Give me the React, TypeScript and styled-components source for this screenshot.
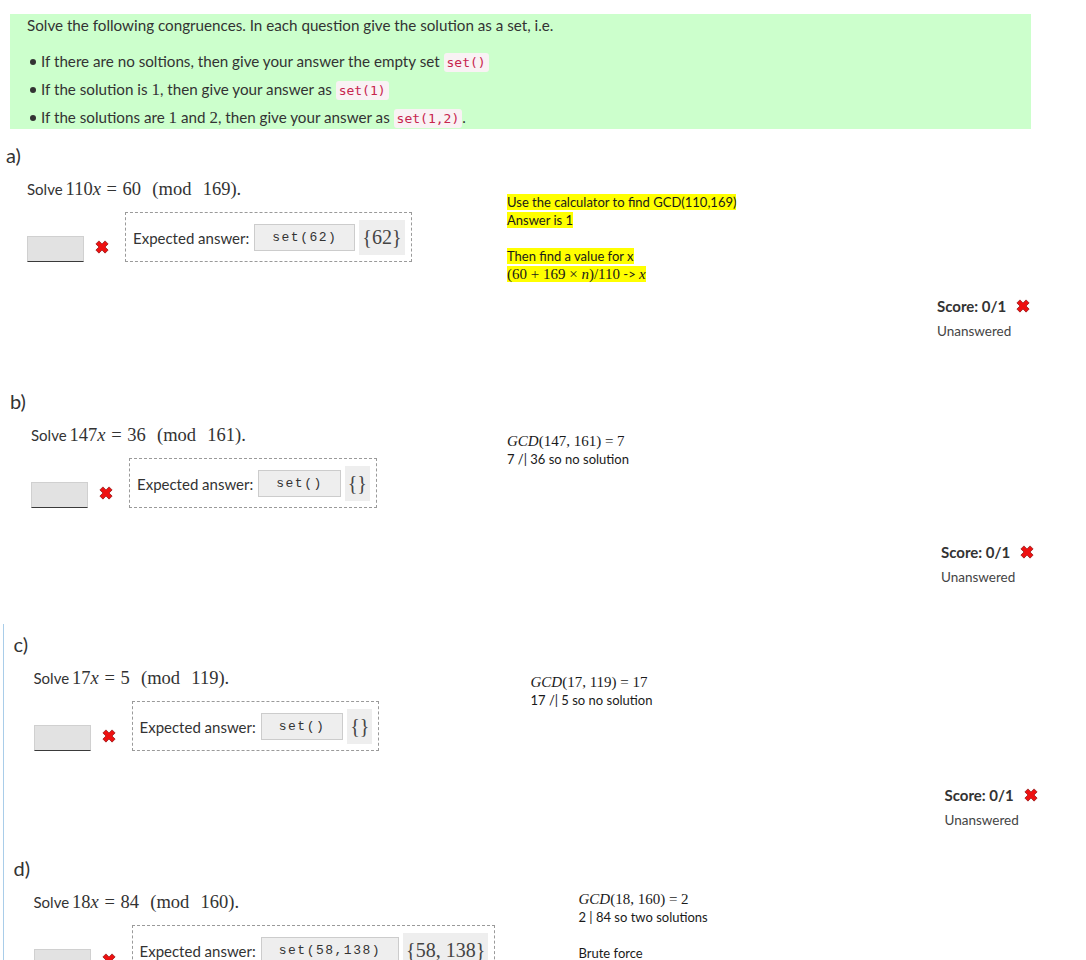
import styled, { createGlobalStyle } from "styled-components";

const GlobalStyle = createGlobalStyle`
    body {
        margin: 0;
        background: #fff;
        color: #333;
        font-family: Lato, "Open Sans", sans-serif;
    }
`;

const Page = styled.div`
    width: 1086px;
    padding-top: 14px;
`;

const Intro = styled.div`
    margin-left: 10px;
    width: 1021px;
    background: #ccffcc;
    padding: 0 17px 0 17px;
    box-sizing: border-box;
    font-size: 15.2px;
    height: 115px;
`;

const IntroText = styled.p`
    margin: 0;
    line-height: 22px;
`;

const BulletList = styled.ul`
    list-style: none;
    margin: 13px 0 0 0;
    padding: 0;
`;

const Bullet = styled.li`
    height: 24px;
    line-height: 24px;
    margin-bottom: 4px;
    &::before {
        content: "";
        display: inline-block;
        width: 6px;
        height: 6px;
        border-radius: 50%;
        background: #333;
        margin: 0 5px 2px 3px;
        vertical-align: middle;
    }
`;

const Code = styled.code`
    font-family: "DejaVu Sans Mono", monospace;
    font-size: 13px;
    line-height: 1;
    color: #c7254e;
    background: #f9f2f4;
    padding: 2px 3px;
    border-radius: 3px;
`;

const MathNum = styled.span`
    font-family: "Liberation Serif", serif;
    font-size: 17px;
    line-height: 1;
`;

// c) and d) share the blue bar on the left
const PartGroup = styled.div`
    margin-top: 37px;
    margin-left: 3px;
    border-left: 1.5px solid #a9cde9;
    padding: 8px 0 0 9.5px;
`;

const Part = styled.section<{ $shift: number; $top: number }>`
    margin-left: ${(p) => p.$shift}px;
    margin-top: ${(p) => p.$top}px;
    width: 1025px;
`;

const PartLabel = styled.h4`
    margin: 0 0 10px 0;
    font-weight: normal;
    font-size: 20px;
    line-height: 24px;
`;

// question | notes | score, the notes may run down past the answer row
const PartBody = styled.div<{ $indent: number; $col: number }>`
    padding-left: ${(p) => p.$indent}px;
    display: grid;
    grid-template-columns: ${(p) => p.$col}px 1fr auto;
    grid-template-rows: auto auto;
    align-items: start;
`;

const QuestionCol = styled.div`
    grid-column: 1;
    grid-row: 1;
`;

const Prompt = styled.p`
    margin: 0;
    font-size: 15px;
    line-height: 24px;
`;

const Math = styled.span`
    font-family: "Liberation Serif", "DejaVu Serif", serif;
    font-size: 18.5px;
    line-height: 1;
    margin-left: 3px;
    word-spacing: 1px;
`;

const MathVar = styled.i`
    font-family: "Liberation Serif", serif;
`;

const AnswerRow = styled.div`
    display: flex;
    align-items: flex-end;
    margin-top: 11px;
`;

const AnswerInput = styled.div`
    width: 57px;
    height: 26px;
    box-sizing: border-box;
    background: #e2e2e2;
    border: 1px solid #d0d0d0;
    border-bottom: 1.5px solid #3a3a3a;
`;

const CrossWrap = styled.span<{ $bottom?: number }>`
    display: inline-flex;
    margin: 0 16px ${(p) => p.$bottom ?? 0}px 11px;
`;

const Expected = styled.div`
    display: flex;
    align-items: center;
    border: 1px dashed #9a9a9a;
    padding: 7px 6px 6px 7px;
    font-size: 15px;
`;

const ExpectedLabel = styled.span`
    margin-right: 5px;
`;

const CodeBox = styled.span`
    height: 27px;
    box-sizing: border-box;
    display: inline-flex;
    align-items: center;
    padding: 0 17px;
    background: #eeeeee;
    border: 1px solid #cccccc;
    font-family: "Liberation Mono", monospace;
    font-size: 13px;
    letter-spacing: 1.5px;
    color: #333;
    margin-right: 4px;
`;

const MathBox = styled.span`
    height: 35px;
    display: inline-flex;
    align-items: center;
    padding: 0 3px;
    background: #eeeeee;
    font-family: "Liberation Serif", serif;
    font-size: 20px;
    color: #444;
`;

const Notes = styled.div<{ $top: number }>`
    grid-column: 2;
    grid-row: 1 / span 2;
    margin-top: ${(p) => p.$top}px;
    font-family: Lato, sans-serif;
    font-size: 13px;
    line-height: 18px;
    color: #1a1a1a;
`;

const NoteLine = styled.div`
    height: 18px;
    white-space: nowrap;
`;

const Mark = styled.span`
    background: #ffff00;
`;

const NoteMath = styled.span`
    font-family: "Liberation Serif", "DejaVu Serif", serif;
    font-size: 15px;
    line-height: 1;
`;

const ScoreBlock = styled.div`
    grid-column: 3;
    grid-row: 2;
    margin-top: 34px;
    width: 94px;
`;

const ScoreLine = styled.div`
    display: flex;
    align-items: center;
    font-weight: bold;
    font-size: 15px;
    line-height: 20px;
    gap: 10px;
`;

const ScoreStatus = styled.div`
    margin-top: 5px;
    font-size: 13.5px;
    line-height: 20px;
    color: #444;
`;

function Cross() {
    return (
        <svg width="14" height="14" viewBox="0 0 16 16">
            <path
                d="M1 4.5 L4.5 1 L8 4.5 L11.5 1 L15 4.5 L11.5 8 L15 11.5 L11.5 15 L8 11.5 L4.5 15 L1 11.5 L4.5 8 Z"
                fill="#ee1111"
                stroke="#8a1010"
                strokeWidth="0.8"
                strokeLinejoin="round"
            />
        </svg>
    );
}

type PartData = {
    label: string;
    shift: number;
    top: number;
    indent: number;
    colWidth: number;
    notesTop: number;
    a: string;
    b: string;
    m: string;
    code: string;
    set: string;
    notes: React.ReactNode;
};

const parts: PartData[] = [
    {
        label: "a)",
        shift: 6,
        top: 14,
        indent: 21,
        colWidth: 480,
        notesTop: 16,
        a: "110",
        b: "60",
        m: "169",
        code: "set(62)",
        set: "{62}",
        notes: (
            <>
                <NoteLine>
                    <Mark>Use the calculator to find GCD(110,169)</Mark>
                </NoteLine>
                <NoteLine>
                    <Mark>Answer is 1</Mark>
                </NoteLine>
                <NoteLine />
                <NoteLine>
                    <Mark>Then find a value for x</Mark>
                </NoteLine>
                <NoteLine>
                    <Mark>
                        <NoteMath>
                            (60 + 169 × <i>n</i>)/110
                        </NoteMath>{" "}
                        -&gt; <NoteMath><i>x</i></NoteMath>
                    </Mark>
                </NoteLine>
            </>
        ),
    },
    {
        label: "b)",
        shift: 10,
        top: 48,
        indent: 21,
        colWidth: 476,
        notesTop: 9,
        a: "147",
        b: "36",
        m: "161",
        code: "set()",
        set: "{}",
        notes: (
            <>
                <NoteLine>
                    <NoteMath>
                        <i>GCD</i>(147, 161) = 7
                    </NoteMath>
                </NoteLine>
                <NoteLine>7 /| 36 so no solution</NoteLine>
            </>
        ),
    },
];

const groupedParts: PartData[] = [
    {
        label: "c)",
        shift: 0,
        top: 0,
        indent: 20,
        colWidth: 497,
        notesTop: 7,
        a: "17",
        b: "5",
        m: "119",
        code: "set()",
        set: "{}",
        notes: (
            <>
                <NoteLine>
                    <NoteMath>
                        <i>GCD</i>(17, 119) = 17
                    </NoteMath>
                </NoteLine>
                <NoteLine>17 /| 5 so no solution</NoteLine>
            </>
        ),
    },
    {
        label: "d)",
        shift: 0,
        top: 26,
        indent: 20,
        colWidth: 545,
        notesTop: 0,
        a: "18",
        b: "84",
        m: "160",
        code: "set(58,138)",
        set: "{58, 138}",
        notes: (
            <>
                <NoteLine>
                    <NoteMath>
                        <i>GCD</i>(18, 160) = 2
                    </NoteMath>
                </NoteLine>
                <NoteLine>2 | 84 so two solutions</NoteLine>
                <NoteLine />
                <NoteLine>Brute force</NoteLine>
            </>
        ),
    },
];

function Question({ p }: { p: PartData }) {
    return (
        <Part $shift={p.shift} $top={p.top}>
            <PartLabel>{p.label}</PartLabel>
            <PartBody $indent={p.indent} $col={p.colWidth}>
                <QuestionCol>
                    <Prompt>
                        Solve
                        <Math>
                            {p.a}
                            <MathVar>x</MathVar> = {p.b}&nbsp;&nbsp;(mod&nbsp;&nbsp;{p.m}).
                        </Math>
                    </Prompt>
                    <AnswerRow>
                        <AnswerInput />
                        <CrossWrap $bottom={8}>
                            <Cross />
                        </CrossWrap>
                        <Expected>
                            <ExpectedLabel>Expected answer:</ExpectedLabel>
                            <CodeBox>{p.code}</CodeBox>
                            <MathBox>{p.set}</MathBox>
                        </Expected>
                    </AnswerRow>
                </QuestionCol>
                <Notes $top={p.notesTop}>{p.notes}</Notes>
                <ScoreBlock>
                    <ScoreLine>
                        Score: 0/1
                        <Cross />
                    </ScoreLine>
                    <ScoreStatus>Unanswered</ScoreStatus>
                </ScoreBlock>
            </PartBody>
        </Part>
    );
}

export default function App() {
    return (
        <Page>
            <GlobalStyle />
            <Intro>
                <IntroText>
                    Solve the following congruences. In each question give the solution as a set, i.e.
                </IntroText>
                <BulletList>
                    <Bullet>
                        If there are no soltions, then give your answer the empty set <Code>set()</Code>
                    </Bullet>
                    <Bullet>
                        If the solution is <MathNum>1</MathNum>, then give your answer as <Code>set(1)</Code>
                    </Bullet>
                    <Bullet>
                        If the solutions are <MathNum>1</MathNum> and <MathNum>2</MathNum>, then give your answer as{" "}
                        <Code>set(1,2)</Code>.
                    </Bullet>
                </BulletList>
            </Intro>
            {parts.map((p) => (
                <Question key={p.label} p={p} />
            ))}
            <PartGroup>
                {groupedParts.map((p) => (
                    <Question key={p.label} p={p} />
                ))}
            </PartGroup>
        </Page>
    );
}
